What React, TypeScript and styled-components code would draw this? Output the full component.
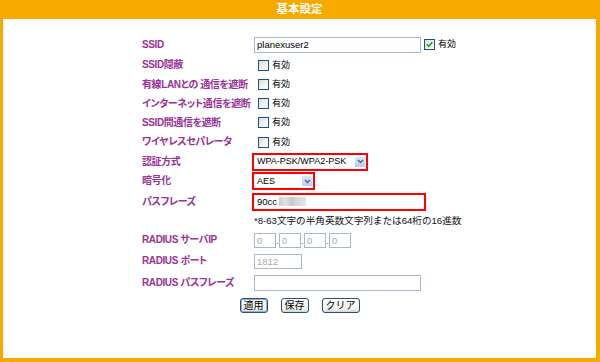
import React from "react";
import styled, { createGlobalStyle } from "styled-components";

const GlobalStyle = createGlobalStyle`
  html, body {
    margin: 0;
    padding: 0;
    background: #ffffff;
  }
  body {
    font-family: "Liberation Sans", "Noto Sans CJK JP", sans-serif;
  }
`;

const Frame = styled.div`
  width: 600px;
  height: 362px;
  box-sizing: border-box;
  background: #f8a900;
  padding: 0 4px 4px 3px;
  display: flex;
  flex-direction: column;
`;

const Header = styled.div`
  height: 19px;
  display: flex;
  align-items: center;
  justify-content: center;
  color: #ffffff;
  font-weight: bold;
  font-size: 11.5px;
  line-height: 1;
`;

const Panel = styled.div`
  flex: 1;
  background: #ffffff;
  padding-top: 15px;
  display: flex;
  flex-direction: column;
  align-items: center;
`;

const Form = styled.div`
  display: grid;
  width: 317px;
  grid-template-columns: 113px 204px;
  grid-template-rows: 21px 20px 19px 19px 19px 20px 19px 20px 21px 18px 20px 22px 22px;
  font-size: 10px;
  line-height: 1;
`;

const Label = styled.div`
  display: flex;
  align-items: center;
  color: #993399;
  font-weight: bold;
  font-size: 10px;
  letter-spacing: -0.4px;
  font-feature-settings: "palt";
  white-space: nowrap;
  padding-left: 1px;
`;

const Field = styled.div`
  display: flex;
  align-items: center;
  white-space: nowrap;
  gap: 3px;
`;

const TextInput = styled.input<{ $width: number; $muted?: boolean; $height?: number }>`
  box-sizing: border-box;
  width: ${(p) => p.$width}px;
  height: ${(p) => p.$height ?? 16}px;
  margin: 0;
  padding: 0 2px;
  border: 1px solid #a5b9d0;
  font-family: inherit;
  font-size: 9.5px;
  color: ${(p) => (p.$muted ? "#a8a8a8" : "#000000")};
  background: #ffffff;
  outline: none;
`;

const CheckLabel = styled.span<{ $indent?: number }>`
  display: inline-flex;
  align-items: center;
  gap: 3px;
  margin-left: ${(p) => p.$indent ?? 0}px;
  color: #000000;
  font-size: 9px;
`;

const Box = styled.span`
  box-sizing: border-box;
  width: 11px;
  height: 11px;
  border: 1px solid #1c5180;
  background: linear-gradient(135deg, #dcdcd5 0%, #ffffff 90%);
  display: inline-flex;
  align-items: center;
  justify-content: center;
`;

const Highlight = styled.span`
  display: inline-flex;
  align-items: center;
  border: 2px solid #ff0000;
  padding: 1px 1px 1px 2px;
  margin-left: -2px;
`;

const FakeSelect = styled.span<{ $width: number }>`
  box-sizing: border-box;
  width: ${(p) => p.$width}px;
  height: 12px;
  display: inline-flex;
  align-items: center;
  justify-content: space-between;
  font-size: 9px;
  color: #000000;
  padding-left: 1px;
`;

const ArrowButton = styled.span`
  width: 10px;
  height: 10px;
  background: linear-gradient(#dde7fb, #b9cdf4);
  display: inline-flex;
  align-items: center;
  justify-content: center;
`;

const Redacted = styled.span`
  display: inline-block;
  width: 27px;
  height: 9px;
  margin-left: 2px;
  background: linear-gradient(90deg, #cfcfcf 0%, #e2e2e2 25%, #c9c9c9 45%, #dadada 70%, #e6e6e6 100%);
  filter: blur(0.6px);
`;

const PassText = styled.span`
  box-sizing: border-box;
  width: 167px;
  height: 12px;
  display: inline-flex;
  align-items: center;
  padding-left: 1px;
  font-size: 9.5px;
`;

const Note = styled.div`
  display: flex;
  align-items: center;
  font-size: 9.6px;
  color: #111111;
  white-space: nowrap;
`;

const Dot = styled.span`
  width: 3px;
  align-self: flex-end;
  font-size: 9px;
  color: #555;
  line-height: 14px;
  text-align: center;
`;

const IpGroup = styled.div`
  display: flex;
  align-items: center;
`;

const ButtonRow = styled.div`
  display: flex;
  gap: 13px;
  margin-top: 4px;
`;

const Button = styled.button<{ $primary?: boolean }>`
  height: 15px;
  margin: 0;
  padding: 0 3px;
  font-family: inherit;
  font-size: 10px;
  line-height: 1;
  color: #000000;
  border: 1px solid #2a4d7a;
  border-radius: 3px;
  background: linear-gradient(#ffffff, #f0efe9 80%, #d7d2c6);
  box-shadow: ${(p) => (p.$primary ? "inset 0 0 0 1px #8caee0" : "none")};
`;

const Check = ({ checked }: { checked?: boolean }) => (
  <Box>
    {checked && (
      <svg width="7" height="7" viewBox="0 0 7 7">
        <path d="M0.8 3.4 L2.7 5.3 L6.3 1.2" fill="none" stroke="#21a121" strokeWidth="1.6" />
      </svg>
    )}
  </Box>
);

const Enable = ({ checked, indent }: { checked?: boolean; indent?: number }) => (
  <CheckLabel $indent={indent}>
    <Check checked={checked} />
    有効
  </CheckLabel>
);

const Select = ({ value, width }: { value: string; width: number }) => (
  <Highlight>
    <FakeSelect $width={width}>
      {value}
      <ArrowButton>
        <svg width="7" height="5" viewBox="0 0 7 5">
          <path d="M1 1 L3.5 3.5 L6 1" fill="none" stroke="#4d6185" strokeWidth="1.4" />
        </svg>
      </ArrowButton>
    </FakeSelect>
  </Highlight>
);

const checkRows = ["SSID隠蔽", "有線LANとの 通信を遮断", "インターネット通信を遮断", "SSID間通信を遮断", "ワイヤレスセパレータ"];

export default function App() {
  return (
    <>
      <GlobalStyle />
      <Frame>
        <Header>基本設定</Header>
        <Panel>
          <Form>
            <Label>SSID</Label>
            <Field>
              <TextInput $width={167} defaultValue="planexuser2" />
              <Enable checked />
            </Field>

            {checkRows.map((name) => (
              <React.Fragment key={name}>
                <Label>{name}</Label>
                <Field>
                  <Enable indent={4} />
                </Field>
              </React.Fragment>
            ))}

            <Label>認証方式</Label>
            <Field>
              <Select value="WPA-PSK/WPA2-PSK" width={109} />
            </Field>

            <Label>暗号化</Label>
            <Field>
              <Select value="AES" width={56} />
            </Field>

            <Label>パスフレーズ</Label>
            <Field>
              <Highlight>
                <PassText>
                  90cc
                  <Redacted />
                </PassText>
              </Highlight>
            </Field>

            <div />
            <Note>*8-63文字の半角英数文字列または64桁の16進数</Note>

            <Label>RADIUS サーバIP</Label>
            <Field>
              <IpGroup>
                <TextInput $width={22} $height={15} $muted defaultValue="0" />
                <Dot>.</Dot>
                <TextInput $width={22} $height={15} $muted defaultValue="0" />
                <Dot>.</Dot>
                <TextInput $width={22} $height={15} $muted defaultValue="0" />
                <Dot>.</Dot>
                <TextInput $width={22} $height={15} $muted defaultValue="0" />
              </IpGroup>
            </Field>

            <Label>RADIUS ポート</Label>
            <Field>
              <TextInput $width={48} $height={15} $muted defaultValue="1812" />
            </Field>

            <Label>RADIUS パスフレーズ</Label>
            <Field>
              <TextInput $width={167} />
            </Field>
          </Form>
          <ButtonRow>
            <Button $primary>適用</Button>
            <Button>保存</Button>
            <Button>クリア</Button>
          </ButtonRow>
        </Panel>
      </Frame>
    </>
  );
}
